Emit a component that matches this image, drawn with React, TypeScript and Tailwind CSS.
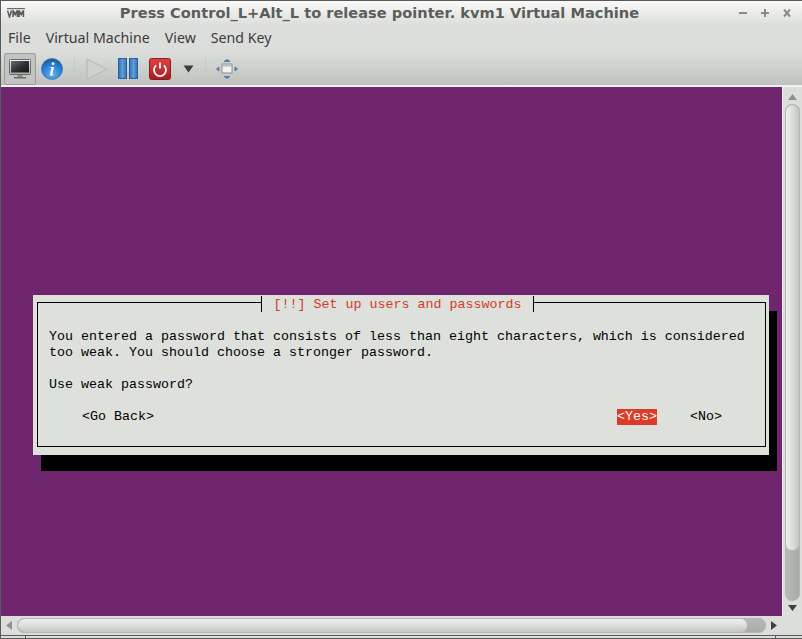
import React from "react";

const mono = "font-['Liberation_Mono','DejaVu_Sans_Mono',monospace] text-[13.33px] leading-[16px] whitespace-pre";

function Monitor() {
  return (
    <svg width="22" height="20" viewBox="0 0 22 20">
      <defs>
        <linearGradient id="mf" x1="0" y1="0" x2="0" y2="1"><stop offset="0" stopColor="#f4f4f2" /><stop offset="1" stopColor="#a9aba8" /></linearGradient>
        <linearGradient id="ms" x1="0" y1="0" x2="1" y2="1"><stop offset="0" stopColor="#5f6a72" /><stop offset="0.55" stopColor="#2a3034" /><stop offset="1" stopColor="#15181a" /></linearGradient>
      </defs>
      <rect x="0.5" y="0.5" width="21" height="15" rx="1" fill="url(#mf)" stroke="#6a6c6a" />
      <rect x="2" y="2" width="18" height="11.500" fill="url(#ms)" />
      <rect x="8.500" y="16" width="5" height="2" fill="#8a8c8a" />
      <rect x="5" y="18" width="12" height="1.500" fill="#6a6c6a" />
    </svg>
  );
}
function Info() {
  return (
    <svg width="22" height="22" viewBox="0 0 24 24">
      <defs>
        <radialGradient id="ib" cx="0.5" cy="0.75" r="0.75"><stop offset="0" stopColor="#5db2f2" /><stop offset="0.6" stopColor="#2a7fd3" /><stop offset="1" stopColor="#15589f" /></radialGradient>
      </defs>
      <circle cx="12" cy="12" r="11.500" fill="url(#ib)" stroke="#2a6db0" strokeWidth="0.6" />
      <path d="M13.200 4.500a1.600 1.600 0 1 1 -.01 0zM10.500 9.800h3.800l-1.900 8h1.200l-.3 1.200H9.500l1.900-8H10.200z" fill="#fff" />
    </svg>
  );
}
function Play() {
  return (
    <svg width="22" height="22" viewBox="0 0 22 22">
      <path d="M1 1L21 11 1 21z" fill="#cfd1cd" stroke="#b5b7b3" />
    </svg>
  );
}
function Pause() {
  return (
    <svg width="20" height="21" viewBox="0 0 20 21">
      <defs><linearGradient id="pb" x1="0" y1="0" x2="1" y2="0"><stop offset="0" stopColor="#2f6fb4" /><stop offset="0.5" stopColor="#5f9fdc" /><stop offset="1" stopColor="#2f6fb4" /></linearGradient></defs>
      <rect x="0.500" y="0.500" width="8" height="20" fill="url(#pb)" stroke="#2b5f96" />
      <rect x="11.500" y="0.500" width="8" height="20" fill="url(#pb)" stroke="#2b5f96" />
    </svg>
  );
}
function Power() {
  return (
    <svg width="22" height="22" viewBox="0 0 22 22">
      <defs><linearGradient id="rb" x1="0" y1="0" x2="0" y2="1"><stop offset="0" stopColor="#e2403f" /><stop offset="1" stopColor="#a81d21" /></linearGradient></defs>
      <rect x="0.500" y="0.500" width="21" height="21" rx="2" fill="url(#rb)" stroke="#8f1c1f" />
      <path d="M7.200 7.400a6 6 0 1 0 7.600 0" fill="none" stroke="#fff" strokeWidth="1.800" />
      <path d="M11 4.500v6" stroke="#fff" strokeWidth="1.800" />
    </svg>
  );
}
function Fullscreen() {
  return (
    <svg width="22" height="20" viewBox="0 0 22 20">
      <rect x="6" y="5" width="10" height="9" fill="#f2f3f1" stroke="#8b8d8a" />
      <rect x="6.500" y="5.500" width="9" height="2" fill="#b9bbbf" />
      <path d="M11 .5l3 2h-6zM11 19.500l3-2h-6zM.5 10l2.500-2v4zM21.500 10l-2.500-2v4z" fill="#4f7fb8" stroke="#4f7fb8" />
    </svg>
  );
}

function Rule() {
  return <div className="w-px h-[21px] bg-[#eef0ec] border-l border-[#c8cac6]" />;
}

export default function App() {
  return (
    <div className="w-[802px] h-[639px] overflow-hidden flex flex-col bg-[#dcdedb] border-t border-l border-[#5a5a5a]">
      {/* Title bar */}
      <div className="h-[24px] shrink-0 relative flex items-center justify-center bg-gradient-to-b from-[#fafbf9] to-[#dcdedb] font-['DejaVu_Sans',sans-serif] font-bold text-[14.6px] text-[#5c5e5c] pr-[44px]">
        <svg width="18" height="10" viewBox="0 0 18 10" className="absolute left-[6px] top-[7px]">
          <path d="M0 .5h18" stroke="#6a6c6a" strokeWidth="1.400" />
          <path d="M.5 2.500L2.500 9l2-6.500" fill="none" stroke="#6d5a66" strokeWidth="1.600" />
          <path d="M6 9V2.500l2.200 4 2.200-4V9M12 9V2.500l2.200 4 2.200-4V9" fill="none" stroke="#5a5c5a" strokeWidth="1.600" />
        </svg>
        <span>Press Control_L+Alt_L to release pointer. kvm1 Virtual Machine</span>
        <div className="absolute right-[11px] top-[6px] flex gap-[14px]">
          <svg width="8" height="12" viewBox="0 0 8 12"><rect x="0" y="5" width="8" height="2" fill="#8a8c8a" /></svg>
          <svg width="8" height="12" viewBox="0 0 8 12"><path d="M0 5h8v2H0zM3 2h2v8H3z" fill="#8a8c8a" /></svg>
          <svg width="8" height="12" viewBox="0 0 8 12"><path d="M1 2.500l6 7M7 2.500l-6 7" stroke="#8a8c8a" strokeWidth="2" /></svg>
        </div>
      </div>
      {/* Menu bar */}
      <div className="h-[27px] shrink-0 flex items-center pl-[7px] pb-[2px] gap-[15px] font-['Noto_Sans',sans-serif] text-[14.2px] text-[#3c3c3c] bg-[#dcdedb]">
        <span>File</span>
        <span>Virtual Machine</span>
        <span>View</span>
        <span>Send Key</span>
      </div>
      {/* Toolbar */}
      <div className="h-[33px] shrink-0 flex items-center pl-[3px] bg-gradient-to-b from-[#dcdedb] to-[#bfc1be]">
        <div className="w-[32px] h-[32px] flex items-center justify-center rounded-[2px] border border-[#9a9c99] bg-[#c2c4c1]">
          <Monitor />
        </div>
        <div className="ml-[5px]"><Info /></div>
        <div className="ml-[11px]"><Rule /></div>
        <div className="ml-[11px]"><Play /></div>
        <div className="ml-[10px]"><Pause /></div>
        <div className="ml-[11px]"><Power /></div>
        <svg width="11" height="8" viewBox="0 0 11 8" className="ml-[12px]"><path d="M.5 .5h10L5.500 7.500z" fill="#3c3e3c" /></svg>
        <div className="ml-[11px]"><Rule /></div>
        <div className="ml-[10px]"><Fullscreen /></div>
      </div>
      {/* Separator */}
      <div className="h-[2px] shrink-0 bg-[#f0f1ef]" />
      {/* Viewport with scrollbar */}
      <div className="flex h-[529px] shrink-0">
        <div className="w-[781px] bg-[#70266e] pl-[32px] pt-[208px]">
          <div className={`w-[736px] h-[160px] bg-[#dee0dc] shadow-[8px_16px_0_0_#000] pl-[4px] pt-[7px] text-black ${mono}`}>
            <div className="relative w-[729px] h-[145px] border border-black pl-[11px] pt-[26px]">
              <div className="absolute left-[223px] top-[-7px] w-[273px] h-[16px] pt-[1px] bg-[#dee0dc] border-x border-black text-center text-[#d63a24]">
                [!!] Set up users and passwords
              </div>
              <div>You entered a password that consists of less than eight characters, which is considered</div>
              <div>too weak. You should choose a stronger password.</div>
              <div className="h-[16px]" />
              <div>Use weak password?</div>
              <div className="h-[16px]" />
              <div className="flex pl-[33px]">
                <span>&lt;Go Back&gt;</span>
                <span className="ml-[463px] bg-[#dd3b27] text-white">&lt;Yes&gt;</span>
                <span className="ml-[33px]">&lt;No&gt;</span>
              </div>
            </div>
          </div>
        </div>
        {/* Vertical scrollbar */}
        <div className="w-[19px] flex flex-col items-center bg-[#dcdedb] border-l border-[#eef0ec] pt-[7px]">
          <svg width="9" height="6" viewBox="0 0 9 6" className="shrink-0"><path d="M4.500 0l4.500 6H0z" fill="#8f918e" /></svg>
          <div className="mt-[4px] w-[15px] h-[497px] shrink-0 rounded-[7px] border border-[#b4b6b3] bg-gradient-to-r from-[#b8bab7] to-[#a9aba8] overflow-hidden">
            <div className="h-[446px] rounded-[7px] border-b border-[#b4b6b3] bg-gradient-to-r from-[#f0f1ef] via-[#dcdedb] to-[#c4c6c3]" />
          </div>
          <svg width="9" height="6" viewBox="0 0 9 6" className="mt-[4px] shrink-0"><path d="M0 0h9L4.500 6z" fill="#3f413f" /></svg>
        </div>
      </div>
      {/* Horizontal scrollbar */}
      <div className="h-[19px] shrink-0 flex items-center pl-[5px] bg-[#dcdedb]">
        <svg width="6" height="9" viewBox="0 0 6 9" className="shrink-0"><path d="M0 4.500L6 0v9z" fill="#8f918e" /></svg>
        <div className="ml-[5px] w-[749px] h-[15px] shrink-0 rounded-[7px] border border-[#b4b6b3] bg-gradient-to-b from-[#b8bab7] to-[#a9aba8] overflow-hidden">
          <div className="w-[730px] h-full rounded-[7px] border-r border-[#b4b6b3] bg-gradient-to-b from-[#f0f1ef] via-[#dcdedb] to-[#c4c6c3]" />
        </div>
        <svg width="6" height="9" viewBox="0 0 6 9" className="ml-[5px] shrink-0"><path d="M6 4.500L0 0v9z" fill="#3f413f" /></svg>
      </div>
      {/* Bottom edge */}
      <div className="h-[4px] shrink-0 flex border-y border-[#5a5a5a]">
        <div className="w-[25px] border-r border-[#5a5a5a]" />
        <div className="ml-[749px] w-px bg-[#5a5a5a]" />
      </div>
    </div>
  );
}
